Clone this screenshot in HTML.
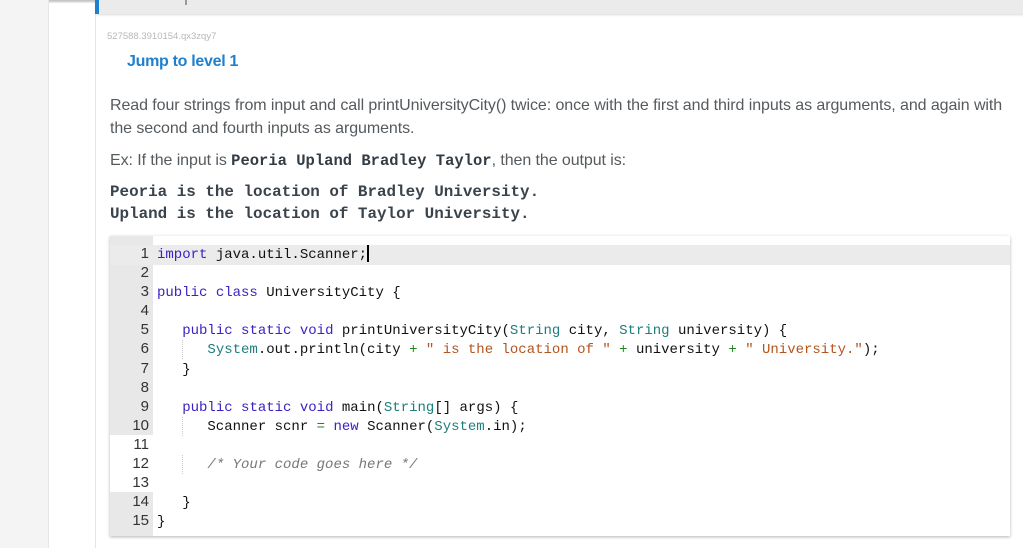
<!DOCTYPE html>
<html><head><meta charset="utf-8"><style>
*{margin:0;padding:0;box-sizing:border-box}
body{width:1023px;height:548px;overflow:hidden;background:#fff;font-family:"Liberation Sans",sans-serif;position:relative}
.lstrip{position:absolute;left:0;top:0;width:49px;height:548px;background:#f4f4f4;border-right:1px solid #e6e6e6}
.topband{position:absolute;left:96px;top:0;width:927px;height:14px;background:#ebebeb;box-shadow:0 1px 2px rgba(0,0,0,.15)}
.topshadow{position:absolute;left:49px;top:0;width:974px;height:3px;background:linear-gradient(#bbb,#eee)}
.bluebar{position:absolute;left:95px;top:0;width:4px;height:14px;background:#1e7fd0}
.tick{position:absolute;left:185px;top:0;width:2px;height:5px;background:#999}
.panel{position:absolute;left:95px;top:14px;width:928px;height:534px;border-left:1px solid #e4e4e4}
.id{position:absolute;left:107px;top:31px;font-size:9.5px;color:#b8b8b8}
.jump{position:absolute;left:127px;top:53px;font-size:16px;font-weight:bold;color:#1f7fcf;letter-spacing:-.3px}
.p{position:absolute;left:110px;font-size:16px;color:#555a5e;white-space:nowrap;letter-spacing:-.08px}
.mono{font-family:"Liberation Mono",monospace;font-weight:bold;font-size:15.5px;color:#333c44;letter-spacing:0}
.ex{position:absolute;left:110px;font-family:"Liberation Mono",monospace;font-weight:bold;font-size:15.9px;color:#3a434b;white-space:pre}
.ed{position:absolute;left:110px;top:236px;width:900px;height:300px;background:#fff;box-shadow:0 1px 3px rgba(0,0,0,.3)}
.gut{position:absolute;left:0;top:0;width:43px;height:300px;background:#e8e8e8}
.gutw{position:absolute;left:0;top:199px;width:43px;height:57px;background:#fff}
.hl{position:absolute;left:0;top:9px;width:900px;height:20px;background:#ebebeb}
.code{position:absolute;left:0;top:9px;font-family:"Liberation Mono",monospace;font-size:14px;line-height:19.1px;white-space:pre;color:#111}
.n{display:inline-block;width:39px;text-align:right;color:#333;margin-right:8px;font-family:"Liberation Sans",sans-serif;font-size:15px;line-height:10px}
.k{color:#3a22c4}.t{color:#1e7d7d}.s{color:#b3541e}.o{color:#1b8a1b}.c{color:#777;font-style:italic}
.cur{display:inline-block;width:2px;height:17px;background:#000;vertical-align:-4px}
.guide{position:absolute;left:72px;width:0;border-left:1px dotted #ccc}
</style></head><body>
<div class="lstrip"></div>
<div class="topshadow"></div>
<div class="topband"></div>
<div class="bluebar"></div>
<div class="tick"></div>
<div class="panel"></div>
<div class="id">527588.3910154.qx3zqy7</div>
<div class="jump">Jump to level 1</div>
<div class="p" style="top:97px">Read four strings from input and call printUniversityCity() twice: once with the first and third inputs as arguments, and again with</div>
<div class="p" style="top:120px">the second and fourth inputs as arguments.</div>
<div class="p" style="top:152px">Ex: If the input is <span class="mono">Peoria Upland Bradley Taylor</span>, then the output is:</div>
<div class="ex" style="top:183px">Peoria is the location of Bradley University.</div>
<div class="ex" style="top:205px">Upland is the location of Taylor University.</div>
<div class="ed">
<div class="gut"></div><div class="gutw"></div><div class="hl"></div>
<div class="guide" style="top:104px;height:19px"></div>
<div class="guide" style="top:181px;height:19px"></div>
<div class="guide" style="top:219px;height:19px"></div>
<div class="code"><span class="n">1</span><span class="k">import</span> java.util.Scanner;<span class="cur"></span>
<span class="n">2</span>
<span class="n">3</span><span class="k">public</span> <span class="k">class</span> UniversityCity {
<span class="n">4</span>
<span class="n">5</span>   <span class="k">public</span> <span class="k">static</span> <span class="k">void</span> printUniversityCity(<span class="t">String</span> city, <span class="t">String</span> university) {
<span class="n">6</span>      <span class="t">System</span>.out.println(city <span class="o">+</span> <span class="s">" is the location of "</span> <span class="o">+</span> university <span class="o">+</span> <span class="s">" University."</span>);
<span class="n">7</span>   }
<span class="n">8</span>
<span class="n">9</span>   <span class="k">public</span> <span class="k">static</span> <span class="k">void</span> main(<span class="t">String</span>[] args) {
<span class="n">10</span>      Scanner scnr <span class="o">=</span> <span class="k">new</span> Scanner(<span class="t">System</span>.in);
<span class="n">11</span>
<span class="n">12</span>      <span class="c">/* Your code goes here */</span>
<span class="n">13</span>
<span class="n">14</span>   }
<span class="n">15</span>}</div>
</div>
</body></html>
